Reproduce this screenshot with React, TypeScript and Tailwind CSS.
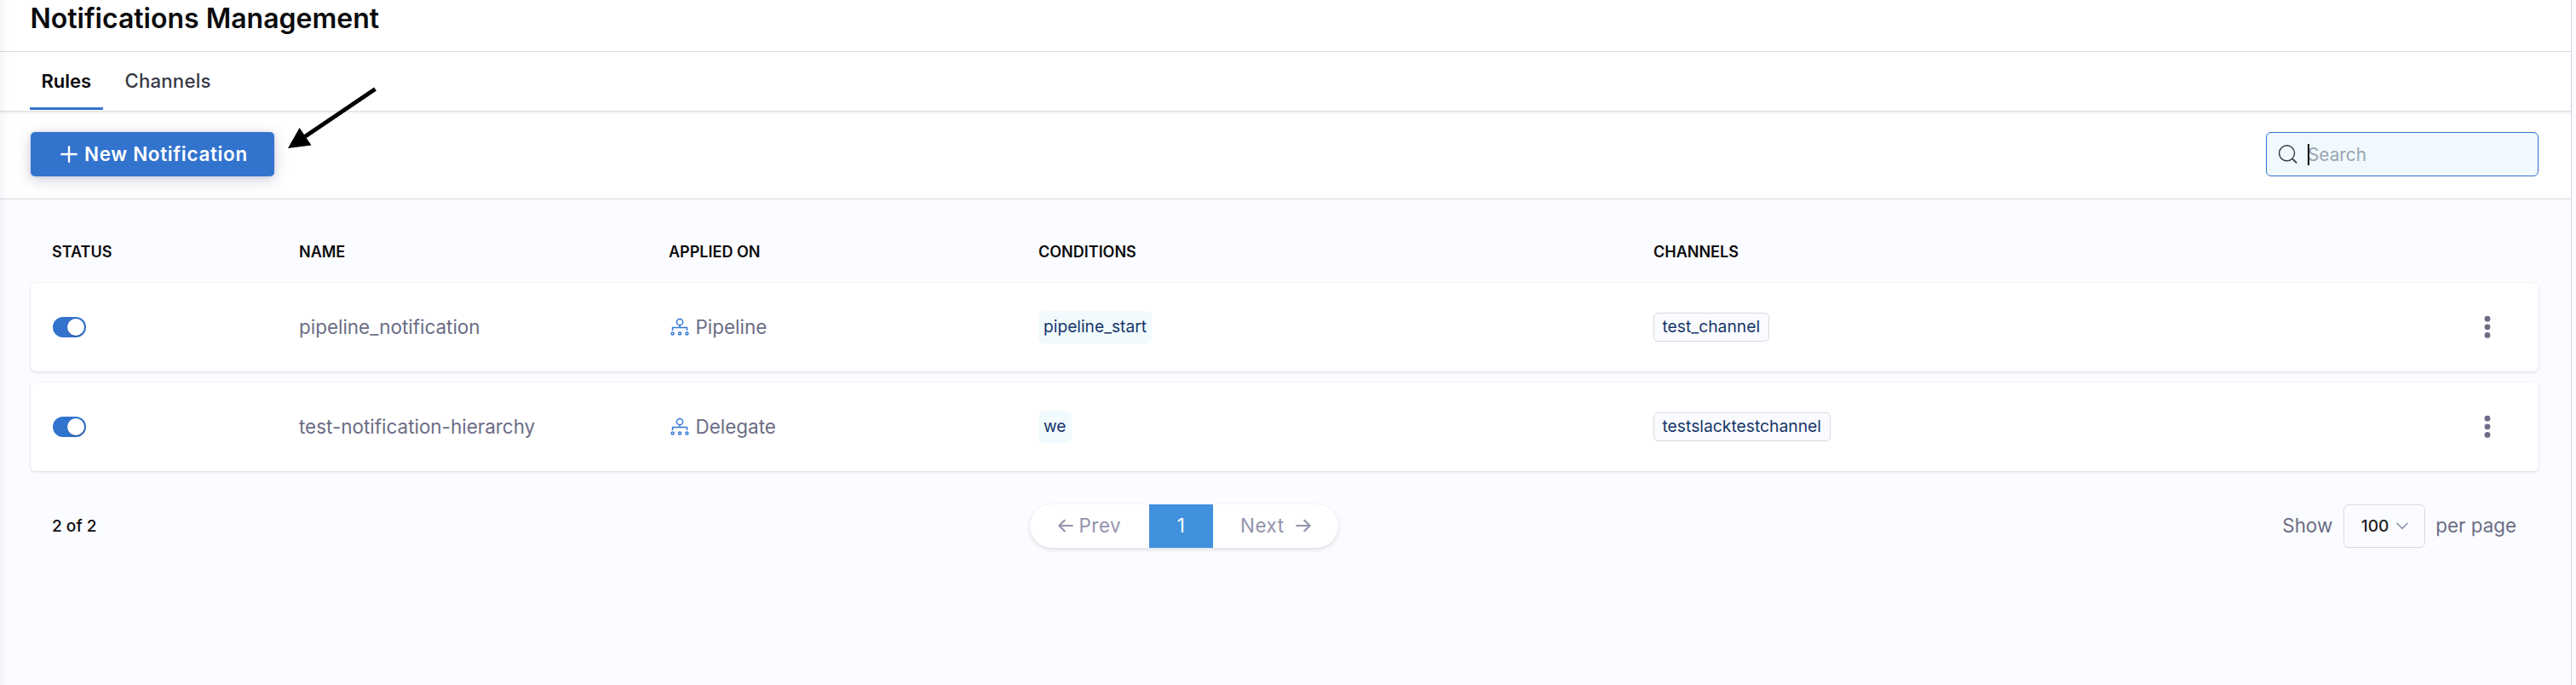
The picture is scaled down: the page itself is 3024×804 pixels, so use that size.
import React from "react";

const columns = "grid grid-cols-[289px_434px_434px_722px_1fr] px-[26px]";

const rules = [
  { name: "pipeline_notification", appliedOn: "Pipeline", condition: "pipeline_start", channel: "test_channel" },
  { name: "test-notification-hierarchy", appliedOn: "Delegate", condition: "we", channel: "testslacktestchannel" },
];

function HierarchyIcon() {
  return (
    <svg width="22" height="22" viewBox="0 0 22 22" fill="none" stroke="#3478d6" strokeWidth="1.5">
      <circle cx="11" cy="5" r="3.6" />
      <path d="M11 8.6V11.2M2.5 15V11.4H19.5V15" />
      <circle cx="2.6" cy="18.6" r="1.5" />
      <circle cx="11" cy="18.6" r="1.5" />
      <circle cx="19.4" cy="18.6" r="1.5" />
    </svg>
  );
}

function Toggle() {
  return (
    <span className="flex h-6 w-[39px] items-center justify-end rounded-full bg-[#3273ce] pr-[2.5px]">
      <span className="size-[19.5px] rounded-full bg-white shadow-[0_1px_2px_rgba(16,22,40,0.3)]" />
    </span>
  );
}

function Arrow({ right = false }: { right?: boolean }) {
  return (
    <svg width="18" height="16" viewBox="0 0 18 16" fill="none" stroke="currentColor" strokeWidth="2.2" strokeLinecap="round" strokeLinejoin="round">
      {right ? <path d="M1.2 8H16.5M10.3 1.8L16.6 8L10.3 14.2" /> : <path d="M16.8 8H1.5M7.7 1.8L1.4 8L7.7 14.2" />}
    </svg>
  );
}

function RuleRow({ rule }: { rule: (typeof rules)[number] }) {
  return (
    <div className={`${columns} h-[104px] items-center rounded-[6px] bg-white text-[22.45px] text-[#6b6d85] shadow-[0_1px_3px_rgba(40,41,61,0.16),0_0_2px_rgba(40,41,61,0.04)]`}>
      <Toggle />
      <div className="pb-px leading-7">{rule.name}</div>
      <div className="flex items-center">
        <span className="ml-[2px]">
          <HierarchyIcon />
        </span>
        <span className="ml-[7.5px] pb-px leading-7">{rule.appliedOn}</span>
      </div>
      <div className="flex">
        <span className="h-[38px] rounded-[6px] bg-[#f1fafd] px-[6px] text-[19.2px] leading-[36px] text-[#16356a]">{rule.condition}</span>
      </div>
      <div className="flex items-center justify-between pr-[30px]">
        <span className="h-[34px] rounded-[5px] border border-[#d9dae5] bg-[#fafbfe] px-[9.5px] text-[19.3px] leading-[31px] text-[#16356a]">
          {rule.channel}
        </span>
        <svg width="8" height="28" viewBox="0 0 8 28" fill="#6b6d85">
          <circle cx="4" cy="4.2" r="3.4" />
          <circle cx="4" cy="13.8" r="3.4" />
          <circle cx="4" cy="23.4" r="3.4" />
        </svg>
      </div>
    </div>
  );
}

export default function App() {
  return (
    <div className="relative flex h-[804px] w-[3024px] overflow-hidden bg-[#fcfcff] font-['Inter',sans-serif]">
      <div className="flex w-[3019px] flex-col border-r border-[#d9dae5] bg-[#fbfcff]">
        <header className="h-[61px] border-b border-[#d9dae5] bg-white pl-[35.5px]">
          <h1 className="text-[32px] leading-[43px] font-semibold text-[#0b0b0d]">Notifications Management</h1>
        </header>

        <nav className="z-10 flex h-[69px] bg-white pl-[35px] text-[22px] leading-[68px] shadow-[0_1px_0_#e1e1e3,0_2px_3px_rgba(40,41,61,0.12)]">
          <div className="h-[68px] w-[85.5px] rounded-b-[1px] border-b-[3px] border-[#3273ce] pl-[13.5px] font-semibold text-[#0b0b0d]">Rules</div>
          <div className="pl-[26px] text-[22.2px] font-[450] tracking-[0.2px] text-[#383946]">Channels</div>
        </nav>

        <div className="flex h-[104px] shrink-0 items-start justify-between border-b border-[#d9dae5] bg-white pt-[25px] pr-[38px] pl-[36px]">
          <button className="flex h-[52px] w-[286px] items-center rounded-[5px] bg-[#3273ce] pl-[35px] text-[22.4px] font-semibold tracking-[0.7px] whitespace-nowrap text-white shadow-[0_4px_16px_rgba(60,60,120,0.26),0_0_4px_rgba(60,60,120,0.12)]">
            <svg width="20" height="20" viewBox="0 0 20 20" stroke="white" strokeWidth="2.4" strokeLinecap="round">
              <path d="M10 1.3V18.7M1.3 10H18.7" />
            </svg>
            <span className="ml-[8px]">New Notification</span>
          </button>
          <div className="flex h-[52px] w-[320px] items-center rounded-[6px] border border-[#3273ce] bg-[#f0f9fd] pl-[13.5px] text-[20.8px] text-[#9aa5b4]">
            <svg width="22" height="22" viewBox="0 0 22 22" fill="none" stroke="#383946" strokeWidth="1.4">
              <circle cx="9.6" cy="9.8" r="9" />
              <path d="M15.8 16.2L21.2 21.3" strokeWidth="1.8" />
            </svg>
            <span className="z-10 ml-[12.5px] h-[25px] w-[2px] shrink-0 bg-black" />
            <span className="-ml-[2px] pt-px">Search</span>
          </div>
        </div>

        <main className="pr-[38px] pl-[36px]">
          <div className={`${columns} h-[98px] pt-[50px] text-[18px] leading-[23px] font-semibold text-[#0b0b0d]`}>
            <div className="-ml-px">STATUS</div>
            <div>NAME</div>
            <div>APPLIED ON</div>
            <div>CONDITIONS</div>
            <div>CHANNELS</div>
          </div>

          <div className="flex flex-col gap-[13px]">
            {rules.map((rule) => (
              <RuleRow key={rule.name} rule={rule} />
            ))}
          </div>

          <div className="mt-[39px] grid h-[51px] grid-cols-[1173px_362px_1fr] items-center text-[22.4px] text-[#6b6d85]">
            <div className="pb-px pl-[25px] text-[19.1px] font-medium text-[#0b0b0d]">2 of 2</div>
            <div className="flex h-[51px] items-center rounded-full bg-white tracking-[0.55px] text-[#9293ab] shadow-[0_2px_5px_rgba(40,41,61,0.14),0_0_2px_rgba(40,41,61,0.04)]">
              <div className="flex w-[140px] items-center pl-[32.5px]">
                <Arrow />
                <span className="ml-[7px] pb-px">Prev</span>
              </div>
              <div className="flex h-[51px] w-[75px] items-center justify-center bg-[#4190de] pb-px text-white">1</div>
              <div className="flex items-center pl-[32px]">
                <span className="pb-px">Next</span>
                <span className="ml-[13px]">
                  <Arrow right />
                </span>
              </div>
            </div>
            <div className="flex items-center justify-end pr-[26px]">
              <span className="pb-px">Show</span>
              <div className="mr-[12px] ml-[13px] flex h-[51px] w-[96px] items-center rounded-[6px] border border-[#d9dae5] pl-[19.5px] text-[19.2px] font-medium text-[#1c1c22]">
                100
                <svg className="ml-[9px]" width="14" height="9" viewBox="0 0 14 9" fill="none" stroke="#9293ab" strokeWidth="1.6" strokeLinecap="round">
                  <path d="M1 1.2L7 7.4L13 1.2" />
                </svg>
              </div>
              <span className="pb-px">per page</span>
            </div>
          </div>
        </main>
      </div>

      <div className="pointer-events-none absolute inset-y-0 left-0 z-20 w-[10px] bg-gradient-to-r from-[rgba(60,60,110,0.045)] to-transparent" />
      <svg className="pointer-events-none absolute top-[98px] left-[334px] z-20" width="112" height="80" viewBox="0 0 112 80">
        <path d="M106.500 6.500L20 65" stroke="black" strokeWidth="5" />
        <path d="M4 76L17.600 52L31.500 72.500Z" fill="black" />
      </svg>
    </div>
  );
}
